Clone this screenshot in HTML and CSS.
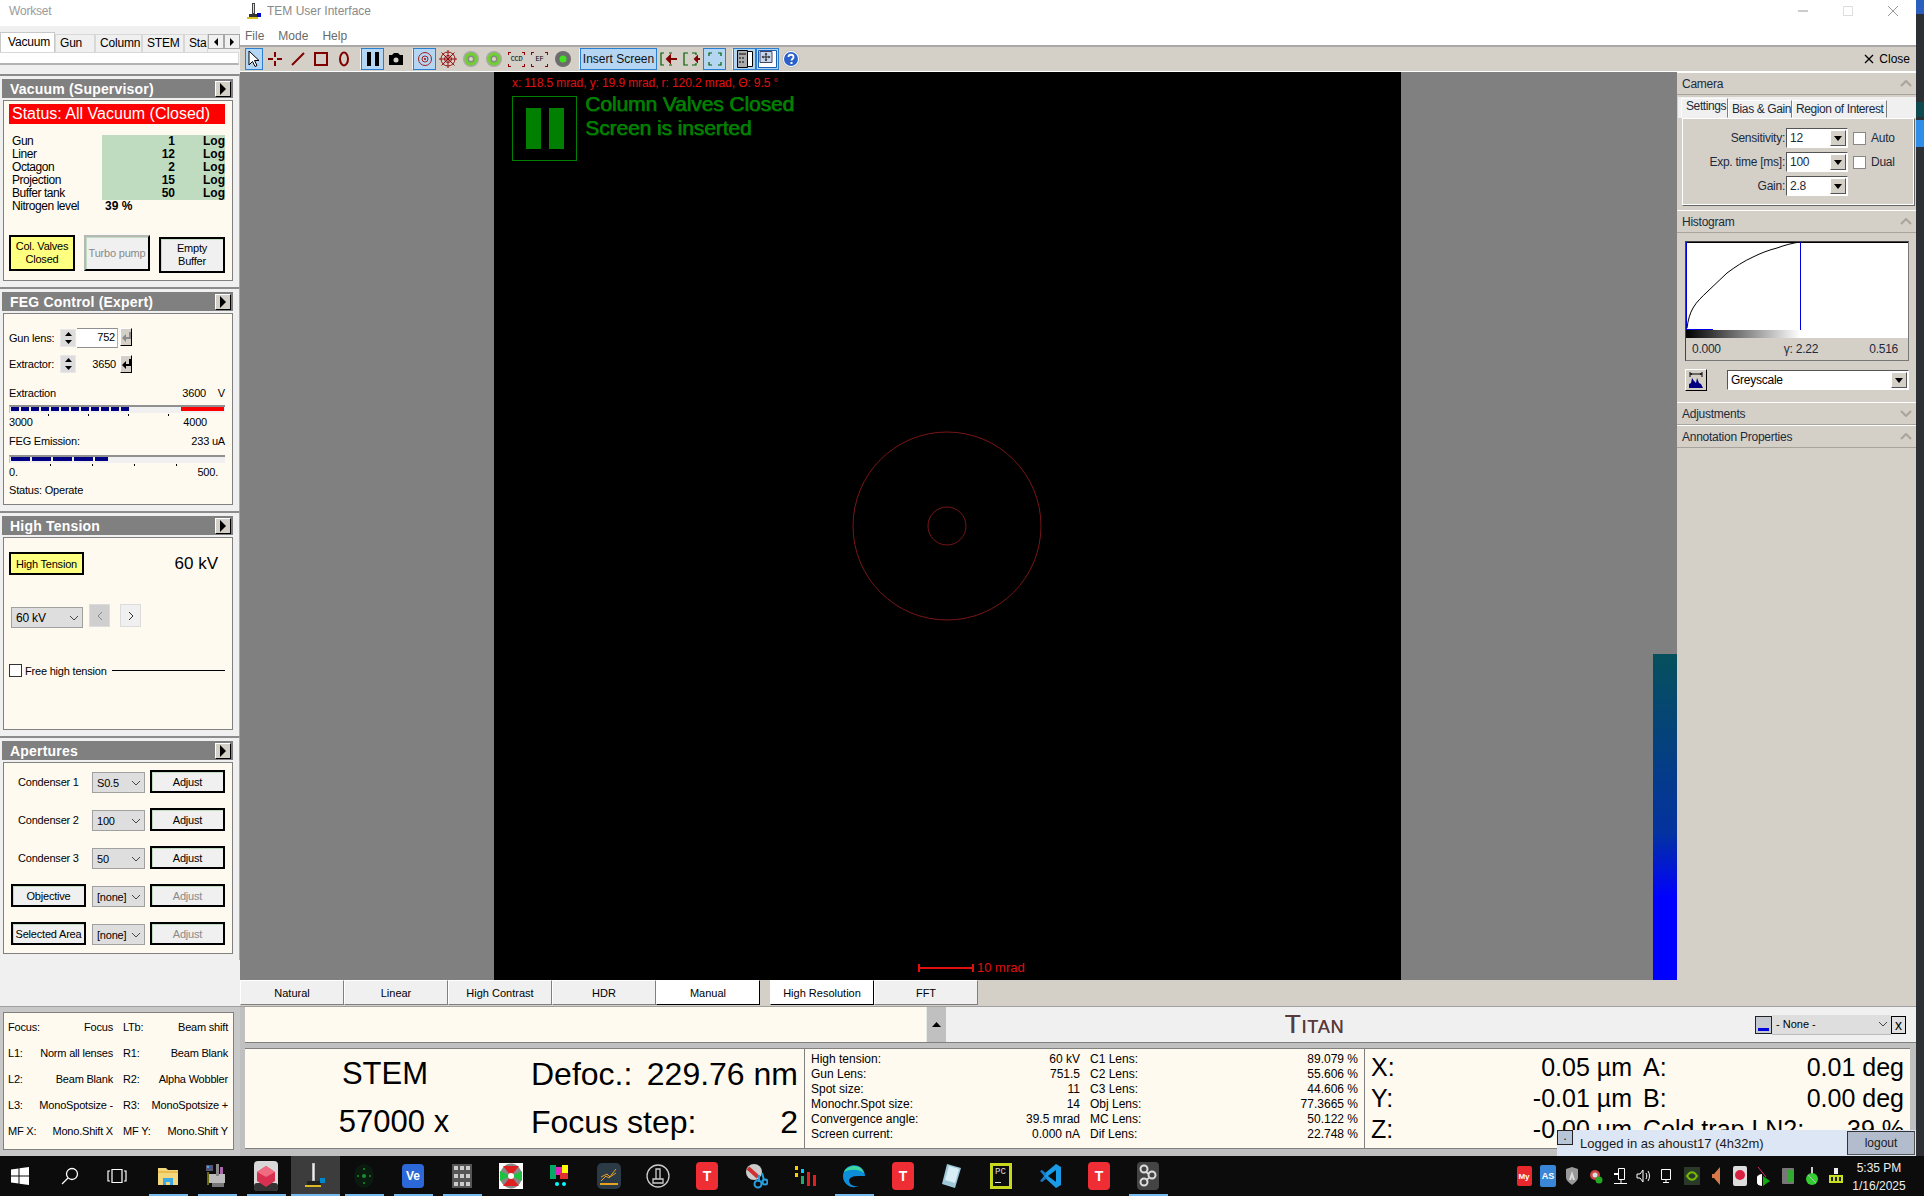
FILE: index.html
```html
<!DOCTYPE html>
<html lang="en">
<head>
<meta charset="utf-8">
<title>TEM User Interface</title>
<link rel="stylesheet" href="styles.css">
</head>
<body>
<div class="app">
  <div class="desk">
    <aside class="side">
      <div class="ws-title">Workset</div>
      <div class="ws-tabs">
        <span class="ws-tab on t54">Vacuum</span><span class="ws-tab t40">Gun</span><span class="ws-tab t47">Column</span><span class="ws-tab t42">STEM</span><span class="ws-tab t24">Sta</span>
        <span class="ws-arrows"><i class="ws-arrow"><svg width="6" height="8" viewBox="0 0 6 8"><path d="M5 0v8L1 4z"/></svg></i><i class="ws-arrow"><svg width="6" height="8" viewBox="0 0 6 8"><path d="M1 0v8l4-4z"/></svg></i></span>
      </div>
      <div class="ws-page"></div>

      <section class="panel first">
        <header class="p-head"><span>Vacuum (Supervisor)</span><i class="p-btn"><svg width="8" height="12" viewBox="0 0 8 12"><path d="M1 0v12l6-6z"/></svg></i></header>
        <div class="p-body vac">
          <div class="vac-status">Status: All Vacuum (Closed)</div>
          <div class="vac-grid">
            <div class="vac-l">Gun</div><div class="vac-g"><b class="vn">1</b><b>Log</b></div>
            <div class="vac-l">Liner</div><div class="vac-g"><b class="vn">12</b><b>Log</b></div>
            <div class="vac-l">Octagon</div><div class="vac-g"><b class="vn">2</b><b>Log</b></div>
            <div class="vac-l">Projection</div><div class="vac-g"><b class="vn">15</b><b>Log</b></div>
            <div class="vac-l">Buffer tank</div><div class="vac-g"><b class="vn">50</b><b>Log</b></div>
            <div class="vac-l">Nitrogen level</div><div class="vac-n"><b>39 %</b></div>
          </div>
          <div class="vac-btns">
            <div class="btn yellow vb">Col. Valves<br>Closed</div>
            <div class="btn dis vb">Turbo pump</div>
            <div class="btn vb low">Empty<br>Buffer</div>
          </div>
        </div>
      </section>

      <section class="panel">
        <header class="p-head"><span>FEG Control (Expert)</span><i class="p-btn"><svg width="8" height="12" viewBox="0 0 8 12"><path d="M1 0v12l6-6z"/></svg></i></header>
        <div class="p-body feg">
          <div class="feg-row r1">
            <span class="feg-lab">Gun lens:</span>
            <span class="spin"><svg width="9" height="5" viewBox="0 0 9 5"><path d="M4.5 0L9 5H0z"/></svg><svg width="9" height="5" viewBox="0 0 9 5"><path d="M4.5 5L9 0H0z"/></svg></span>
            <span class="feg-in">752</span>
            <span class="ret off"><svg width="9" height="11" viewBox="0 0 9 11"><path d="M7 0h2v7H4v3L0 6l4-4v3h3z"/></svg></span>
          </div>
          <div class="feg-row r2">
            <span class="feg-lab">Extractor:</span>
            <span class="spin"><svg width="9" height="5" viewBox="0 0 9 5"><path d="M4.5 0L9 5H0z"/></svg><svg width="9" height="5" viewBox="0 0 9 5"><path d="M4.5 5L9 0H0z"/></svg></span>
            <span class="feg-val">3650</span>
            <span class="ret"><svg width="9" height="11" viewBox="0 0 9 11"><path d="M7 0h2v7H4v3L0 6l4-4v3h3z"/></svg></span>
          </div>
          <div class="feg-line m10"><span>Extraction</span><span class="pair"><span>3600</span><span class="unit">V</span></span></div>
          <div class="bar m4"><span class="seg s1"></span><span class="seg-red"></span></div>
          <div class="ticks k1"></div>
          <div class="feg-line lbl"><span>3000</span><span class="endlab">4000</span></div>
          <div class="feg-line m5"><span>FEG Emission:</span><span>233 uA</span></div>
          <div class="bar m6"><span class="seg s2"></span></div>
          <div class="ticks k2"></div>
          <div class="feg-line lbl"><span>0.</span><span class="endlab2">500.</span></div>
          <div class="feg-line m4"><span>Status: Operate</span></div>
        </div>
      </section>

      <section class="panel">
        <header class="p-head"><span>High Tension</span><i class="p-btn"><svg width="8" height="12" viewBox="0 0 8 12"><path d="M1 0v12l6-6z"/></svg></i></header>
        <div class="p-body ht">
          <div class="ht-top"><div class="btn yellow ht-btn">High Tension</div><span class="ht-kv">60 kV</span></div>
          <div class="ht-mid">
            <div class="combo ht-combo"><span>60 kV</span><svg width="10" height="6" viewBox="0 0 10 6"><path d="M1 1l4 4 4-4" fill="none" stroke="#444"/></svg></div>
            <span class="nav dis-nav"><svg width="6" height="10" viewBox="0 0 6 10"><path d="M5 1L1 5l4 4" fill="none" stroke="#888"/></svg></span>
            <span class="nav"><svg width="6" height="10" viewBox="0 0 6 10"><path d="M1 1l4 4-4 4" fill="none" stroke="#333"/></svg></span>
          </div>
          <div class="ht-free"><i class="chk"></i><span>Free high tension</span><i class="ht-rule"></i></div>
        </div>
      </section>

      <section class="panel">
        <header class="p-head"><span>Apertures</span><i class="p-btn"><svg width="8" height="12" viewBox="0 0 8 12"><path d="M1 0v12l6-6z"/></svg></i></header>
        <div class="p-body ap">
          <span class="ap-lab">Condenser 1</span><div class="combo"><span>S0.5</span><svg width="10" height="6" viewBox="0 0 10 6"><path d="M1 1l4 4 4-4" fill="none" stroke="#444"/></svg></div><div class="btn">Adjust</div>
          <span class="ap-lab">Condenser 2</span><div class="combo"><span>100</span><svg width="10" height="6" viewBox="0 0 10 6"><path d="M1 1l4 4 4-4" fill="none" stroke="#444"/></svg></div><div class="btn">Adjust</div>
          <span class="ap-lab">Condenser 3</span><div class="combo"><span>50</span><svg width="10" height="6" viewBox="0 0 10 6"><path d="M1 1l4 4 4-4" fill="none" stroke="#444"/></svg></div><div class="btn">Adjust</div>
          <div class="btn">Objective</div><div class="combo"><span>[none]</span><svg width="10" height="6" viewBox="0 0 10 6"><path d="M1 1l4 4 4-4" fill="none" stroke="#444"/></svg></div><div class="btn grey">Adjust</div>
          <div class="btn">Selected Area</div><div class="combo"><span>[none]</span><svg width="10" height="6" viewBox="0 0 10 6"><path d="M1 1l4 4 4-4" fill="none" stroke="#444"/></svg></div><div class="btn grey">Adjust</div>
        </div>
      </section>

      <div class="side-fill"></div>

      <section class="keys">
        <div class="keys-body">
          <div class="kc"><span>Focus:</span><span>Focus</span></div><div class="kc"><span>LTb:</span><span>Beam shift</span></div>
          <div class="kc"><span>L1:</span><span>Norm all lenses</span></div><div class="kc"><span>R1:</span><span>Beam Blank</span></div>
          <div class="kc"><span>L2:</span><span>Beam Blank</span></div><div class="kc"><span>R2:</span><span>Alpha Wobbler</span></div>
          <div class="kc"><span>L3:</span><span>MonoSpotsize -</span></div><div class="kc"><span>R3:</span><span>MonoSpotsize +</span></div>
          <div class="kc"><span>MF X:</span><span>Mono.Shift X</span></div><div class="kc"><span>MF Y:</span><span>Mono.Shift Y</span></div>
        </div>
      </section>
    </aside>

    <main class="main">
      <div class="titlebar">
        <svg class="app-ic" width="16" height="18" viewBox="0 0 16 18"><path d="M6 1h3v11H6z" fill="#444"/><path d="M7 2h1v9H7z" fill="#ddd"/><path d="M3 12h9v3H3z" fill="#333"/><path d="M1 15h11v2H1z" fill="#d8c020"/><path d="M11 11h4v4h-4z" fill="#00c"/></svg>
        <span class="app-name">TEM User Interface</span>
        <span class="winctl">
          <svg width="12" height="12" viewBox="0 0 12 12"><path d="M1 6h10" stroke="#999"/></svg>
          <svg width="12" height="12" viewBox="0 0 12 12"><path d="M1.500 1.500h9v9h-9z" fill="none" stroke="#ddd"/></svg>
          <svg width="12" height="12" viewBox="0 0 12 12"><path d="M1 1l10 10M11 1L1 11" stroke="#999"/></svg>
        </span>
      </div>
      <nav class="menu"><span>File</span><span>Mode</span><span>Help</span></nav>
      <div class="toolbar">
        <span class="t on narrow"><svg width="14" height="18" viewBox="0 0 14 18"><path d="M2 1v14l3.500-3.500 2.500 5 2-1-2.500-5H12z" fill="#fff" stroke="#000"/></svg></span>
        <span class="t"><svg width="16" height="16" viewBox="0 0 16 16"><path d="M8 1v5M8 10v5M1 8h5M10 8h5" stroke="#800000" stroke-width="2"/></svg></span>
        <span class="t"><svg width="16" height="16" viewBox="0 0 16 16"><path d="M2 14L14 2" stroke="#800000" stroke-width="2"/></svg></span>
        <span class="t"><svg width="16" height="16" viewBox="0 0 16 16"><path d="M2 2h12v12H2z" fill="none" stroke="#800000" stroke-width="2"/></svg></span>
        <span class="t"><svg width="12" height="16" viewBox="0 0 12 16"><ellipse cx="6" cy="8" rx="4" ry="6.500" fill="none" stroke="#800000" stroke-width="2"/></svg></span>
        <span class="t-sep short"></span>
        <span class="t on"><svg width="14" height="14" viewBox="0 0 14 14"><path d="M1 0h4v14H1zM9 0h4v14H9z" fill="#000"/></svg></span>
        <span class="t"><svg width="16" height="14" viewBox="0 0 16 14"><path d="M1 3h3l2-2h4l2 2h3v10H1z" fill="#000"/><circle cx="8" cy="8" r="2.500" fill="#d4d0c8"/></svg></span>
        <span class="t-sep short"></span>
        <span class="t on"><svg width="16" height="16" viewBox="0 0 16 16" fill="none" stroke="#a02020"><circle cx="8" cy="8" r="6.500"/><circle cx="8" cy="8" r="3"/><circle cx="8" cy="8" r=".7" fill="#a02020"/></svg></span>
        <span class="t"><svg width="18" height="18" viewBox="0 0 18 18" fill="none" stroke="#900000" stroke-width=".9"><circle cx="9" cy="9" r="7"/><circle cx="9" cy="9" r="3.500"/><path d="M9 0v18M0 9h18M2.500 2.500l13 13M15.500 2.500l-13 13"/></svg></span>
        <span class="t"><svg width="16" height="16" viewBox="0 0 16 16"><circle cx="8" cy="8" r="8" fill="#a8a8a0"/><circle cx="8" cy="8" r="6.500" fill="#70d030"/><circle cx="8" cy="8" r="3.500" fill="#888"/><circle cx="8" cy="8" r="2" fill="#d8d8c0"/></svg></span>
        <span class="t"><svg width="16" height="16" viewBox="0 0 16 16"><circle cx="8" cy="8" r="8" fill="#a8a8a0"/><circle cx="8" cy="8" r="6.500" fill="#70d030"/><circle cx="8" cy="8" r="3.500" fill="#888"/><circle cx="8" cy="8" r="2" fill="#d8d8c0"/></svg></span>
        <span class="t"><span class="crop">CCD</span></span>
        <span class="t"><span class="crop">EF</span></span>
        <span class="t"><svg width="16" height="16" viewBox="0 0 16 16"><circle cx="8" cy="8" r="8" fill="#6c6c6c"/><circle cx="8" cy="8" r="3.500" fill="#40e020"/></svg></span>
        <span class="t-sep short"></span>
        <span class="t on wide">Insert Screen</span>
        <span class="t"><svg width="18" height="14" viewBox="0 0 18 14" fill="none" stroke="#006000" stroke-width="1.200"><path d="M4 1H1v12h3M9 1h3M12 13H9"/><path d="M17 7H10M10 4L7 7l3 3z" stroke="#800000" stroke-width="2" fill="#800000"/></svg></span>
        <span class="t"><svg width="18" height="14" viewBox="0 0 18 14" fill="none" stroke="#006000" stroke-width="1.200"><path d="M5 1H1v12h4M9 1h4v2M9 13h4v-2"/><path d="M17 7h-3M14 5l-2 2 2 2z" stroke="#800000" stroke-width="2" fill="#800000"/></svg></span>
        <span class="t on"><svg width="14" height="14" viewBox="0 0 14 14" fill="none" stroke="#006000" stroke-width="1.200"><path d="M4 1H1v3M10 1h3v3M1 10v3h3M13 10v3h-3"/></svg></span>
        <span class="t-sep"></span>
        <span class="t on"><svg width="16" height="18" viewBox="0 0 16 18"><path d="M5.500 1.500h10v15h-10z" fill="#fff" stroke="#000"/><path d="M.5 .5h10v17H.5z" fill="#aaa" stroke="#000"/><path d="M2 3h7v2H2zM2 7h2v2H2zM5 7h2v2H5zM2 11h2v2H2zM5 11h2v2H5z" fill="#555"/></svg></span>
        <span class="t on"><svg width="19" height="18" viewBox="0 0 19 18"><path d="M.5.500h18v17H.5z" fill="#fff" stroke="#1a5fb0"/><path d="M2 1.500h12v11H2z" fill="#c8d8ec" stroke="#446"/><path d="M8 4v6M5 7h6" stroke="#222"/><path d="M8 2.500l-1.500 2h3zM8 11.500l-1.500-2h3zM3.500 7l2-1.500v3zM12.500 7l-2-1.500v3z" fill="#222"/></svg></span>
        <span class="t"><svg width="18" height="18" viewBox="0 0 18 18"><circle cx="9" cy="9" r="8.500" fill="#fff" stroke="#bbb"/><circle cx="9" cy="9" r="7" fill="#2a60c8"/><path d="M6.500 7c0-3 5-3 5 0 0 2-2 2-2 3.500" fill="none" stroke="#fff" stroke-width="1.800"/><path d="M8.500 12h2v2h-2z" fill="#fff"/></svg></span>
        <span class="close"><svg width="10" height="10" viewBox="0 0 10 10"><path d="M1 1l8 8M9 1L1 9" stroke="#000" stroke-width="1.300"/></svg>Close</span>
      </div>

      <div class="work">
        <div class="gutter"></div>
        <div class="canvas">
          <div class="coord">x: 118.5 mrad, y: 19.9 mrad, r: 120.2 mrad, &Theta;: 9.5 &deg;</div>
          <div class="notice">
            <div class="pausebox"><i></i><i></i></div>
            <div class="notice-t"><div>Column Valves Closed</div><div>Screen is inserted</div></div>
          </div>
          <svg class="rings" width="194" height="194" viewBox="0 0 194 194" fill="none" stroke="#7a1616" stroke-width="1"><circle cx="97" cy="97" r="94"/><circle cx="97" cy="97" r="19"/></svg>
          <div class="scale"><svg width="56" height="8" viewBox="0 0 56 8"><path d="M1 0v8M55 0v8M1 4h54" stroke="#e01010" stroke-width="2"/></svg><span>10 mrad</span></div>
        </div>
        <div class="gutter2"></div>
        <div class="lut"><div class="lut-fill"></div></div>
        <div class="right">
          <div class="sec-h"><span>Camera</span><svg width="12" height="7" viewBox="0 0 12 7"><path d="M1 6l5-5 5 5" fill="none" stroke="#a8a49c" stroke-width="2"/></svg></div>
          <div class="cam">
            <div class="cam-tabs"><span class="cam-tab on">Settings</span><span class="cam-tab w63">Bias &amp; Gain</span><span class="cam-tab w94">Region of Interest</span></div>
            <div class="cam-page">
              <div class="cam-row"><span class="cam-l">Sensitivity:</span><div class="cb"><span>12</span><i class="cb-a"><svg width="8" height="5" viewBox="0 0 8 5"><path d="M0 0h8L4 5z"/></svg></i></div><i class="cam-chk"></i><span>Auto</span></div>
              <div class="cam-row"><span class="cam-l">Exp. time [ms]:</span><div class="cb"><span>100</span><i class="cb-a"><svg width="8" height="5" viewBox="0 0 8 5"><path d="M0 0h8L4 5z"/></svg></i></div><i class="cam-chk"></i><span>Dual</span></div>
              <div class="cam-row"><span class="cam-l">Gain:</span><div class="cb"><span>2.8</span><i class="cb-a"><svg width="8" height="5" viewBox="0 0 8 5"><path d="M0 0h8L4 5z"/></svg></i></div></div>
            </div>
          </div>
          <div class="sec-h"><span>Histogram</span><svg width="12" height="7" viewBox="0 0 12 7"><path d="M1 6l5-5 5 5" fill="none" stroke="#a8a49c" stroke-width="2"/></svg></div>
          <div class="hist">
            <div class="hist-box">
              <svg class="hist-plot" width="222" height="96" viewBox="0 0 222 96">
                <defs><linearGradient id="g"><stop offset="0" stop-color="#000"/><stop offset="1" stop-color="#fff"/></linearGradient></defs>
                <rect width="222" height="96" fill="#fff"/>
                <rect x="0" y="88" width="114" height="8" fill="url(#g)"/>
                <path d="M0 .5h222" stroke="#000"/>
                <path d="M.5 0v88M114.500 0v88" stroke="#0000e0"/>
                <path d="M0 87.500h27" stroke="#0000e0"/>
                <path d="M1 86C2 78 4 71 7 66C11 59 16 55 21 50L41 31C49 25 58 19 67 15C75 11 83 8 91 6C99 3 107 1 114 0" fill="none" stroke="#000"/>
              </svg>
              <div class="hist-vals"><span>0.000</span><span class="gam">&gamma;: 2.22</span><span>0.516</span></div>
            </div>
            <div class="hist-ctl">
              <span class="hist-btn"><svg width="18" height="18" viewBox="0 0 18 18"><path d="M3 1v5M15 1v5M3 3h12" stroke="#000"/><path d="M3 3l2-1v2zM15 3l-2-1v2z"/><path d="M2 17v-4l2-1 1-5 2 3 2 2 1-5 2 5 2 1 2 4z" fill="#000080"/></svg></span>
              <div class="cb grow"><span>Greyscale</span><i class="cb-a"><svg width="8" height="5" viewBox="0 0 8 5"><path d="M0 0h8L4 5z"/></svg></i></div>
            </div>
          </div>
          <div class="sec-h"><span>Adjustments</span><svg width="12" height="7" viewBox="0 0 12 7"><path d="M1 1l5 5 5-5" fill="none" stroke="#a8a49c" stroke-width="2"/></svg></div>
          <div class="sec-h"><span>Annotation Properties</span><svg width="12" height="7" viewBox="0 0 12 7"><path d="M1 6l5-5 5 5" fill="none" stroke="#a8a49c" stroke-width="2"/></svg></div>
        </div>
      </div>

      <div class="modes">
        <span class="mode">Natural</span><span class="mode">Linear</span><span class="mode">High Contrast</span><span class="mode">HDR</span><span class="mode act">Manual</span><span class="mode act gapl">High Resolution</span><span class="mode">FFT</span>
      </div>

      <div class="bottom">
        <div class="msg">
          <div class="msg-text"></div>
          <span class="msg-up"><svg width="9" height="5" viewBox="0 0 9 5"><path d="M4.500 0L9 5H0z"/></svg></span>
          <div class="msg-brand"><span class="titan">Titan</span></div>
          <div class="msg-sel">
            <span class="sel-ic"><i></i></span>
            <div class="combo sel-c"><span>- None -</span><svg width="10" height="6" viewBox="0 0 10 6"><path d="M1 1l4 4 4-4" fill="none" stroke="#444"/></svg></div>
            <span class="sel-x">x</span>
          </div>
        </div>
        <div class="stat">
          <div class="st-a">
            <div class="st-mode">STEM</div><div class="st-def"><span>Defoc.:</span><span>229.76 nm</span></div>
            <div class="st-mode mag">57000 x</div><div class="st-foc"><span>Focus step:</span><span>2</span></div>
          </div>
          <div class="st-b">
            <span>High tension:</span><span class="r">60 kV</span><span>C1 Lens:</span><span class="r">89.079 %</span>
            <span>Gun Lens:</span><span class="r">751.5</span><span>C2 Lens:</span><span class="r">55.606 %</span>
            <span>Spot size:</span><span class="r">11</span><span>C3 Lens:</span><span class="r">44.606 %</span>
            <span>Monochr.Spot size:</span><span class="r">14</span><span>Obj Lens:</span><span class="r">77.3665 %</span>
            <span>Convergence angle:</span><span class="r">39.5 mrad</span><span>MC Lens:</span><span class="r">50.122 %</span>
            <span>Screen current:</span><span class="r">0.000 nA</span><span>Dif Lens:</span><span class="r">22.748 %</span>
          </div>
          <div class="st-c">
            <div class="xy"><span>X:</span><span>0.05 &micro;m</span></div><div class="xy"><span>A:</span><span>0.01 deg</span></div>
            <div class="xy"><span>Y:</span><span>-0.01 &micro;m</span></div><div class="xy"><span>B:</span><span>0.00 deg</span></div>
            <div class="xy"><span>Z:</span><span>-0.00 &micro;m</span></div><div class="xy"><span>Cold trap LN2:</span><span>39 %</span></div>
          </div>
        </div>
      </div>
    </main>

    <div class="strip"><i class="sp1"></i><i class="sp2"></i><i class="sp3"></i></div>
  </div>

  <div class="login">
    <span class="login-dot">.</span>
    <span class="login-t">Logged in as ahoust17 (4h32m)</span>
    <span class="logout">logout</span>
  </div>

  <footer class="taskbar">
    <span class="tb-i w40"><svg width="18" height="18" viewBox="0 0 18 18" fill="#fff"><path d="M0 2.500l7.500-1v7H0zM8.500 1.300L18 0v8.500H8.500zM0 9.500h7.500v7l-7.500-1zM8.500 9.500H18V18l-9.500-1.300z"/></svg></span>
    <span class="tb-i w60"><svg width="18" height="18" viewBox="0 0 18 18" fill="none" stroke="#fff" stroke-width="1.300"><circle cx="11" cy="7" r="5.500"/><path d="M7 11l-6 6"/></svg></span>
    <span class="tb-i w34"><svg width="20" height="16" viewBox="0 0 20 16" fill="none" stroke="#fff" stroke-width="1.200"><path d="M5 1.500h10v13H5zM3 3H1v10h2M17 3h2v10h-2"/></svg></span>
    <span class="tb-i run lead"><svg width="22" height="20" viewBox="0 0 22 20"><path d="M1 2h8l2 2h10v15H1z" fill="#f4d77a"/><path d="M1 5h20v2H1z" fill="#e8bd4e"/><path d="M6 19v-7h10v7h-3v-3H9v3z" fill="#3aa9e8"/></svg></span>
    <span class="tb-i run"><svg width="24" height="26" viewBox="0 0 24 26"><path d="M4 11h16v9H4z" fill="#bbb"/><path d="M7 20h12v4H7z" fill="#777"/><path d="M11 1h3v12h-3z" fill="#888"/><path d="M1 2h7v6H1z" fill="#557"/><path d="M2 3h2v2H2z" fill="#4af"/><path d="M15 4h3v7h-3z" fill="#a6a"/><path d="M3 9v13" stroke="#cc0"/></svg></span>
    <span class="tb-i run"><svg width="24" height="30" viewBox="0 0 24 30"><rect width="24" height="30" rx="4" fill="#d8d8d8"/><rect y="22" width="24" height="8" rx="3" fill="#333"/><path d="M12 5l9 6v9l-9 6-9-6v-9z" fill="#d83050"/><path d="M12 5l9 6-9 5-9-5z" fill="#f06a80"/></svg></span>
    <span class="tb-i run act"><svg width="24" height="30" viewBox="0 0 24 30"><path d="M9 2h3v18H9z" fill="#bbb"/><path d="M10 3h1v16h-1z" fill="#eee"/><path d="M4 20h14v4H4z" fill="#222"/><path d="M2 24h16v2H2z" fill="#ddb820"/><path d="M17 17h5v5h-5z" fill="#08c"/></svg></span>
    <span class="tb-i run"><svg width="22" height="26" viewBox="0 0 22 26"><ellipse cx="11" cy="13" rx="10" ry="12" fill="#0a1a0e"/><g fill="#1b8f30"><circle cx="11" cy="13" r="2"/><circle cx="11" cy="6" r="1"/><circle cx="11" cy="20" r="1"/><circle cx="5" cy="13" r="1"/><circle cx="17" cy="13" r="1"/></g></svg></span>
    <span class="tb-i run"><span class="ve">Ve</span></span>
    <span class="tb-i run"><svg width="22" height="26" viewBox="0 0 22 26"><rect x="1" y="1" width="20" height="24" fill="#555"/><g fill="#ccc"><rect x="3" y="3" width="4" height="4"/><rect x="9" y="3" width="4" height="4"/><rect x="15" y="3" width="4" height="4"/><rect x="3" y="11" width="4" height="4"/><rect x="9" y="11" width="4" height="4"/><rect x="15" y="11" width="4" height="4"/><rect x="3" y="19" width="4" height="4"/><rect x="9" y="19" width="4" height="4"/><rect x="15" y="19" width="4" height="4"/></g></svg></span>
    <span class="tb-i"><svg width="24" height="26" viewBox="0 0 24 26"><rect width="24" height="26" fill="#fff"/><ellipse cx="12" cy="13" rx="11" ry="12.500" fill="#888"/><path d="M12 13L4 3h16zM12 13L4 23h16z" fill="#e02020"/><path d="M12 13L1 8v10zM12 13l11-5v10z" fill="#20c040"/><circle cx="12" cy="13" r="3" fill="#fff"/></svg></span>
    <span class="tb-i"><svg width="24" height="26" viewBox="0 0 24 26"><path d="M2 2h6v14H2z" fill="#0a6"/><path d="M8 4h8v8H8z" fill="#e020c0"/><path d="M14 2h6v8h-6z" fill="#ff0"/><path d="M12 10h8v6h-8z" fill="#e03030"/><g fill="#0ff"><circle cx="9" cy="21" r="2"/><circle cx="16" cy="21" r="2"/></g></svg></span>
    <span class="tb-i"><svg width="24" height="26" viewBox="0 0 24 26"><rect width="24" height="26" rx="5" fill="#2b3a45"/><path d="M3 21h18" stroke="#e8a020" stroke-width="2"/><path d="M4 18l5-5 3 2 7-9M4 14l6-3 3 3 6-4" fill="none" stroke="#e8a020"/></svg></span>
    <span class="tb-i"><svg width="24" height="26" viewBox="0 0 24 26" fill="none" stroke="#ccc" stroke-width="1.300"><circle cx="12" cy="13" r="11"/><path d="M10 6h4v10h-4zM7 16h10v4H7z"/></svg></span>
    <span class="tb-i"><span class="tapp">T</span></span>
    <span class="tb-i"><svg width="24" height="26" viewBox="0 0 24 26"><circle cx="10" cy="9" r="8" fill="#ccc"/><path d="M4 5l10 9" stroke="#d03030" stroke-width="4"/><circle cx="14" cy="21" r="3.500" fill="none" stroke="#28a0e0" stroke-width="2"/><circle cx="21" cy="19" r="2.500" fill="none" stroke="#28a0e0" stroke-width="2"/><path d="M15 12l0 7M18 10l2 7" stroke="#28a0e0" stroke-width="2"/></svg></span>
    <span class="tb-i"><svg width="22" height="24" viewBox="0 0 22 24"><g fill="#fc0"><path d="M1 2h3v4H1zM1 9h3v4H1z"/></g><g fill="#0cf"><path d="M7 5h3v4H7z"/></g><g fill="#e02020"><path d="M13 8h3v14h-3zM19 11h3v11h-3z"/></g><path d="M7 12h3v8H7z" fill="#2a6"/></svg></span>
    <span class="tb-i run"><svg width="26" height="26" viewBox="0 0 26 26"><path d="M24 13a11 11 0 10-6 10c-5 1-10-1-10-6 2-5 9-4 16-4z" fill="#0c8ed8"/><path d="M3 9c3-7 17-9 20 1-5-4-14-4-20-1z" fill="#3fd6a0"/></svg></span>
    <span class="tb-i"><span class="tapp">T</span></span>
    <span class="tb-i"><svg width="24" height="26" viewBox="0 0 24 26"><path d="M7 1l14 4-6 20-13-4z" fill="#9fc8d8"/><path d="M9 3l10 3-4 14-10-3z" fill="#d8eef4"/></svg></span>
    <span class="tb-i"><span class="pc">PC<i></i></span></span>
    <span class="tb-i"><svg width="24" height="26" viewBox="0 0 24 26"><path d="M18 1l5 3v18l-5 3-12-11 0-3z" fill="#1a9be8"/><path d="M18 7v12l-8-6z" fill="#0c0c0c"/><path d="M2 8l2-1 5 4-3 2zM2 18l2 1 5-4-3-2z" fill="#1a78c8"/></svg></span>
    <span class="tb-i"><span class="tapp">T</span></span>
    <span class="tb-i run"><svg width="22" height="28" viewBox="0 0 22 28"><rect width="22" height="28" rx="4" fill="#444"/><g fill="none" stroke="#ddd" stroke-width="2"><circle cx="7" cy="7" r="3.500"/><circle cx="15" cy="13" r="3.500"/><circle cx="7" cy="20" r="3.500"/><path d="M9 10l3 2M12 16l-3 2"/></g></svg></span>

    <span class="tray">
      <span class="ti"><span class="my">My</span></span>
      <span class="ti"><span class="as">AS</span></span>
      <span class="ti"><svg width="14" height="18" viewBox="0 0 14 18"><path d="M1 2l6-2 6 2v8c0 4-4 6-6 8-2-2-6-4-6-8z" fill="#999"/><path d="M7 4l3 9H8l-1-3-1 3H4z" fill="#ddd"/></svg></span>
      <span class="ti"><svg width="14" height="16" viewBox="0 0 14 16"><circle cx="6" cy="7" r="5" fill="#c44"/><circle cx="6" cy="7" r="2.500" fill="#ddd"/><circle cx="10" cy="12" r="3.500" fill="#2a2"/></svg></span>
      <span class="ti"><svg width="16" height="18" viewBox="0 0 16 18" fill="none" stroke="#fff"><path d="M6.500 1.500h6v11h-6zM9 13v3M2 16.500h13"/><path d="M2 7h4" stroke-width="2"/></svg></span>
      <span class="ti"><svg width="16" height="16" viewBox="0 0 16 16" fill="none" stroke="#fff"><path d="M1 6h3l3-4v12l-3-4H1z"/><path d="M10 5c1 2 1 4 0 6M12 3c2 3 2 7 0 10"/></svg></span>
      <span class="ti"><svg width="16" height="16" viewBox="0 0 16 16" fill="none" stroke="#fff"><path d="M1.500 1.500h9v10h-9zM6 11.500v3M3 14.500h6"/></svg></span>
      <span class="ti"><svg width="16" height="18" viewBox="0 0 16 18"><rect width="16" height="18" fill="#2a3a2a"/><path d="M3 9c3-5 7-5 10 0-3 5-7 5-10 0z" fill="none" stroke="#76b900" stroke-width="2"/></svg></span>
      <span class="ti"><svg width="10" height="20" viewBox="0 0 10 20"><path d="M9 1v18L3 12H1V8h2z" fill="#d8794a"/></svg></span>
      <span class="ti"><svg width="14" height="20" viewBox="0 0 14 20"><rect width="14" height="20" rx="2" fill="#ddd"/><circle cx="7" cy="9" r="5" fill="#d82040"/></svg></span>
      <span class="ti"><svg width="14" height="20" viewBox="0 0 14 20"><path d="M1 1l8 10" stroke="#e02080"/><path d="M5 8a6 6 0 100 12" fill="#fff"/><path d="M6 10l7 5-7 5z" fill="#1a1"/></svg></span>
      <span class="ti"><svg width="12" height="16" viewBox="0 0 12 16"><rect width="12" height="16" rx="1" fill="#777"/><rect x="6" y="2" width="5" height="12" fill="#3a3"/></svg></span>
      <span class="ti"><svg width="14" height="20" viewBox="0 0 14 20"><path d="M6 1h2v8H6z" fill="#ccc"/><circle cx="7" cy="13" r="6" fill="#3c3"/><path d="M3 9l8 8" stroke="#bbb"/></svg></span>
      <span class="ti"><svg width="16" height="18" viewBox="0 0 16 18"><path d="M6 1h4v6H6z" fill="#eee"/><path d="M1 8h14v8H1z" fill="#c8e020"/><path d="M3 10h2v4H3zM7 10h2v4H7zM11 10h2v4h-2z" fill="#222"/></svg></span>
      <span class="clock"><span>5:35 PM</span><span>1/16/2025</span></span>
    </span>
  </footer>
</div>
</body>
</html>
```
FILE: styles.css
```css
* { box-sizing: border-box; }
html, body { margin: 0; padding: 0; }
body { width: 1924px; height: 1196px; overflow: hidden; font: 11px "Liberation Sans", Arial, sans-serif; color: #000; background: #0c0c0c; }
i { display: block; font-style: normal; }
svg { display: block; flex: none; }

.app { position: relative; width: 1924px; height: 1196px; display: flex; flex-direction: column; }
.desk { display: flex; height: 1156px; flex: none; }

/* ---- left workset ---- */
.side { width: 240px; flex: none; display: flex; flex-direction: column; background: #f0f0f0; letter-spacing: -.2px; }
.ws-title { height: 26px; background: #fff; color: #9a9a9a; font-size: 12px; line-height: 22px; padding-left: 9px; flex: none; }
.ws-tabs { height: 26px; display: flex; align-items: flex-end; flex: none; }
.ws-tab { height: 18px; background: #f0f0f0; border: 1px solid #d8d8d8; border-bottom: 0; font-size: 12px; line-height: 17px; padding-left: 4px; white-space: nowrap; overflow: hidden; }
.ws-tab.on { background: #fff; height: 20px; border-color: #c8c8c8; padding-left: 7px; line-height: 18px; }
.t54 { width: 55px; } .t40 { width: 40px; } .t47 { width: 47px; } .t42 { width: 42px; } .t24 { width: 24px; }
.ws-arrows { display: flex; align-self: flex-start; margin-top: 8px; }
.ws-arrow { width: 16px; height: 15px; background: #f0f0f0; border: 1px solid #a8a8a8; display: flex; align-items: center; justify-content: center; }
.ws-page { height: 13px; width: 239px; background: #fff; border: 1px solid #d8d8d8; border-bottom: 2px solid #b4b4b4; border-left: 0; flex: none; }

.panel { flex: none; border-top: 2px solid #8c8c8c; padding: 3px 6px 6px 2px; display: flex; flex-direction: column; gap: 2px; border-right: 1px solid #a8a8a8; }
.panel.first { margin-top: 9px; }
.p-head { height: 19px; background: #808080; color: #fff; font: bold 14px "Liberation Sans", Arial, sans-serif; letter-spacing: .2px; display: flex; align-items: center; justify-content: space-between; padding: 0 2px 0 8px; flex: none; }
.p-btn { width: 16px; height: 16px; background: #d4d0c8; border: 1px solid; border-color: #fff #000 #000 #fff; display: flex; align-items: center; justify-content: center; }
.p-body { border: 1px solid #808080; background: #fffaf0; margin-left: 1px; }

.vac { height: 181px; padding: 3px 7px 0 5px; }
.vac-status { height: 20px; background: #f00; color: #fff; font-size: 16px; letter-spacing: 0; line-height: 20px; padding-left: 3px; }
.vac-grid { margin-top: 11px; display: grid; grid-template-columns: 93px 123px; grid-auto-rows: 13px; line-height: 13px; font-size: 12px; letter-spacing: -.45px; }
.vac-l { padding-left: 3px; }
.vac-g { background: #c0dcc0; display: grid; grid-template-columns: 73px 1fr; text-align: right; letter-spacing: 0; }
.vac-n { padding-left: 3px; letter-spacing: 0; }
.vac-btns { display: flex; gap: 9px; margin-top: 22px; align-items: flex-start; }
.vb { width: 66px; height: 36px; text-align: center; line-height: 13px; }
.low { margin-top: 2px; }

.btn { border: 2px solid #000; background: #f0f0f0; box-shadow: inset 1px 1px 0 #c0dcc0; display: flex; align-items: center; justify-content: center; text-align: center; font-size: 11px; white-space: nowrap; }
.btn.yellow { background: #ffff80; box-shadow: none; }
.btn.dis { color: #8a8a8a; border-color: #b8b8b8 #000 #000 #b8b8b8; }
.btn.grey { color: #8a8a8a; }

.feg { height: 192px; padding: 14px 7px 0 5px; }
.feg-row { display: flex; align-items: center; height: 20px; }
.r2 { margin-top: 6px; }
.feg-lab { width: 51px; }
.spin { width: 16px; height: 18px; background: #dcdcdc; border: 1px solid #e8e8e8; display: flex; flex-direction: column; justify-content: space-around; align-items: center; }
.spin svg { width: 7px; height: 4px; }
.feg-in { width: 41px; height: 20px; background: #fff; border: 1px solid #909090; border-left: 0; border-right-color: #b0b0b0; text-align: right; padding-right: 2px; line-height: 16px; margin-left: 1px; }
.feg-val { width: 39px; text-align: right; margin-left: 1px; }
.ret { width: 12px; height: 18px; margin-left: 2px; background: #d4d0c8; border: 1px solid; border-color: #fff #000 #000 #fff; display: flex; align-items: center; justify-content: center; }
.r2 .ret { margin-left: 4px; }
.ret.off svg { fill: #8a8a8a; }
.ret.off { margin-bottom: 2px; }
.feg-line { display: flex; justify-content: space-between; height: 16px; line-height: 16px; }
.m10 { margin-top: 11px; } .m4 { margin-top: 4px; } .m5 { margin-top: 5px; } .m6 { margin-top: 6px; }
.pair { display: flex; gap: 11px; }
.unit { width: 8px; text-align: right; }
.bar { height: 8px; width: 216px; background: #f0f0f0; border-top: 2px solid #909090; border-left: 1px solid #c8c8c8; padding: 0 1px 2px 1px; display: flex; justify-content: space-between; }
.seg { display: block; height: 4px; }
.s1 { width: 118px; background: repeating-linear-gradient(to right, #000080 0 8px, transparent 8px 10px); }
.seg-red { display: block; width: 43px; height: 4px; background: #f00; }
.s2 { width: 97px; background: repeating-linear-gradient(to right, #000080 0 19px, transparent 19px 21px); }
.ticks { height: 2px; margin-top: 1px; background-repeat: repeat-x; }
.k1 { width: 165px; background-image: linear-gradient(to right, transparent 39px, #000 39px 41px, transparent 41px); background-size: 40px 2px; }
.k2 { width: 171px; background-image: linear-gradient(to right, transparent 41px, #000 41px 43px, transparent 43px); background-size: 42px 2px; }
.lbl { height: 12px; line-height: 12px; margin-top: 0; }
.endlab { padding-right: 18px; }
.endlab2 { padding-right: 7px; }

.ht { height: 193px; padding: 14px 7px 0 5px; }
.ht-top { display: flex; align-items: center; height: 23px; justify-content: space-between; padding-right: 7px; }
.ht-btn { width: 75px; height: 23px; }
.ht-kv { font-size: 17px; letter-spacing: 0; }
.ht-mid { display: flex; align-items: flex-start; margin-top: 29px; padding-left: 2px; }
.combo { height: 21px; background: #dedede; border: 1px solid #a0a0a0; display: flex; align-items: center; justify-content: space-between; padding: 0 3px 0 4px; font-size: 11px; }
.ht-combo { width: 72px; margin-top: 3px; margin-right: 6px; font-size: 12px; }
.nav { width: 21px; height: 23px; background: #f0f0f0; border: 1px solid #dcdcdc; display: flex; align-items: center; justify-content: center; margin-right: 10px; }
.dis-nav { background: #cfcfcf; }
.ht-free { display: flex; align-items: center; margin-top: 36px; height: 13px; }
.chk { width: 13px; height: 13px; border: 1px solid #333; background: #fff; margin-right: 3px; }
.ht-rule { flex: 1; height: 1px; background: #000; margin-left: 5px; }

.ap { height: 192px; padding: 7px 7px 0 7px; display: grid; grid-template-columns: 75px 54px 75px; column-gap: 5px; grid-auto-rows: 23px; row-gap: 15px; align-items: center; }
.ap-lab { padding-left: 7px; }
.ap .combo { margin-top: 2px; margin-left: 1px; }
.ap .btn { height: 23px; }

.side-fill { flex: 1; }
.keys { height: 150px; background: #c8c8c8; border-top: 1px solid #a0a0a0; padding: 5px 6px 6px 2px; flex: none; }
.keys-body { height: 138px; margin-left: 1px; border: 1px solid #808080; background: #fffaf0; padding: 1px 4px 0 4px; display: grid; grid-template-columns: 105px 105px; column-gap: 10px; grid-auto-rows: 26px; font-size: 11px; }
.kc { display: flex; justify-content: space-between; align-items: center; }

/* ---- main ---- */
.main { width: 1676px; flex: none; display: flex; flex-direction: column; background: #d4d0c8; }
.titlebar { height: 26px; background: #fff; display: flex; align-items: center; padding: 0 0 4px 6px; flex: none; }
.app-ic { margin-right: 5px; }
.app-name { font-size: 12px; color: #8a8a8a; }
.winctl { margin-left: auto; display: flex; gap: 33px; padding-right: 17px; }
.menu { height: 21px; background: #fff; display: flex; gap: 14px; padding: 3px 0 0 5px; color: #6a6a6a; font-size: 12px; border-bottom: 2px solid #a8a8a8; flex: none; }
.toolbar { height: 25px; display: flex; align-items: center; padding-left: 5px; border-bottom: 1px solid #fff; flex: none; }
.t { width: 23px; height: 22px; display: flex; align-items: center; justify-content: center; border: 1px solid transparent; flex: none; font-size: 12px; }
.t.on { background: #b5d6f2; border-color: #2b7fd0; }
.narrow { width: 18px; }
.wide { width: 77px; color: #111; }
.t-sep { width: 7px; height: 20px; border-right: 1px solid #f4f4f4; flex: none; }
.t-sep.short { width: 6px; }
.crop { width: 17px; height: 15px; display: flex; align-items: center; justify-content: center; font: 7px "Liberation Mono", monospace; letter-spacing: -.3px; color: #000;
  background:
    linear-gradient(#900000,#900000) 0 0/3px 1px no-repeat, linear-gradient(#900000,#900000) 0 0/1px 3px no-repeat,
    linear-gradient(#900000,#900000) 100% 0/3px 1px no-repeat, linear-gradient(#900000,#900000) 100% 0/1px 3px no-repeat,
    linear-gradient(#900000,#900000) 0 100%/3px 1px no-repeat, linear-gradient(#900000,#900000) 0 100%/1px 3px no-repeat,
    linear-gradient(#900000,#900000) 100% 100%/3px 1px no-repeat, linear-gradient(#900000,#900000) 100% 100%/1px 3px no-repeat; }
.close { margin-left: auto; display: flex; align-items: center; gap: 5px; padding-right: 6px; font-size: 12px; }

.work { height: 908px; display: grid; grid-template-columns: 254px 907px 252px 24px 239px; flex: none; }
.gutter, .gutter2 { background: #808080; }
.canvas { position: relative; background: #000; overflow: hidden; }
.coord { position: absolute; left: 18px; top: 4px; color: #e01010; font-size: 12px; letter-spacing: -.1px; white-space: nowrap; }
.notice { position: absolute; left: 18px; top: 24px; display: flex; gap: 8px; }
.pausebox { width: 65px; height: 65px; border: 1px solid #008000; display: flex; gap: 8px; justify-content: center; align-items: center; }
.pausebox i { width: 15px; height: 41px; background: #007f00; }
.notice-t { color: #007f00; font-size: 21px; letter-spacing: -.1px; line-height: 24px; margin-top: -4px; text-shadow: .6px 0 0 #007f00, 1px 1px 0 #003000; }
.rings { position: absolute; left: 356px; top: 357px; }
.scale { position: absolute; left: 424px; top: 888px; display: flex; align-items: center; gap: 3px; color: #e01010; font-size: 13px; }
.lut { background: #808080; display: flex; align-items: flex-end; }
.lut-fill { width: 100%; height: 326px; background: linear-gradient(to bottom, #05505c 0%, #0432a0 55%, #0000ff 75%, #0000ff 100%); }

.right { background: #d4d0c8; display: flex; flex-direction: column; letter-spacing: -.25px; }
.sec-h { height: 23px; flex: none; border-top: 1px solid #fff; border-bottom: 1px solid #a8a49c; display: flex; align-items: center; justify-content: space-between; padding: 0 4px 0 5px; font-size: 12px; color: #1c2a3a; }
.cam { height: 115px; flex: none; padding: 2px 0 4px 5px; }
.cam-tabs { display: flex; height: 21px; background: #f0f0f0; margin-left: -4px; padding-left: 3px; align-items: flex-end; }
.cam-tab { height: 18px; padding: 0 0 0 3px; background: #f0f0f0; border: 1px solid; border-color: #fff #808080 transparent #fff; font-size: 12px; letter-spacing: -.4px; white-space: nowrap; line-height: 17px; width: 47px; color: #1c2a3a; }
.cam-tab.on { height: 20px; padding: 0 0 0 4px; line-height: 15px; }
.w63 { width: 64px; } .w94 { width: 95px; }
.cam-page { height: 88px; border: 1px solid; border-color: #fff #666 #666 #fff; background: #d4d0c8; padding-top: 9px; margin-right: 1px; box-shadow: inset -1px -1px 0 #fff; }
.cam-row { display: flex; align-items: center; height: 20px; margin-bottom: 4px; font-size: 12px; color: #1c2a3a; }
.cam-l { width: 103px; text-align: right; padding-right: 1px; }
.cb { width: 62px; height: 20px; background: #fff; border: 1px solid; border-color: #555 #fff #fff #555; display: flex; align-items: center; justify-content: space-between; padding-left: 3px; font-size: 12px; }
.cb-a { width: 16px; height: 16px; background: #d4d0c8; border: 1px solid; border-color: #fff #555 #555 #fff; display: flex; align-items: center; justify-content: center; margin-right: 1px; }
.cam-chk { width: 13px; height: 13px; background: #fff; border: 1px solid #888; margin: 0 5px; }
.hist { height: 169px; flex: none; padding: 8px 7px 0 8px; }
.hist-box { height: 120px; border: 1px solid; border-color: #444 #777 #777 #444; }
.hist-plot { width: 222px; }
.hist-vals { display: flex; justify-content: space-between; padding: 4px 10px 0 6px; font-size: 12px; color: #1c2a3a; }
.gam { margin-left: 12px; }
.hist-ctl { display: flex; align-items: center; margin-top: 8px; }
.hist-btn { width: 22px; height: 22px; border: 1px solid; border-color: #fff #000 #000 #fff; display: flex; align-items: center; justify-content: center; margin-right: 20px; }
.grow { flex: 1; }

.modes { height: 26px; display: flex; flex: none; }
.mode { width: 104px; height: 25px; background: #f0f0f0; border: 1px solid; border-color: #fff #808080 #808080 #fff; display: flex; align-items: center; justify-content: center; font-size: 11px; }
.mode.act { background: #fff; border-color: #fff #000 #000 #fff; }
.gapl { margin-left: 10px; }

.bottom { height: 150px; flex: none; background: #c0c0c0; border-top: 1px solid #a0a0a0; padding-left: 5px; width: 1676px; }
.msg { height: 36px; display: flex; border-bottom: 1px solid #808080; }
.msg-text { width: 681px; background: #fffaf0; }
.msg-up { width: 20px; background: #c0c0c0; display: flex; align-items: center; justify-content: center; border-left: 1px solid #e8e8e8; }
.msg-brand { width: 809px; background: #f0f0f0; display: flex; justify-content: center; align-items: center; padding-right: 72px; }
.titan { font: 26px "Liberation Sans", sans-serif; font-variant: small-caps; letter-spacing: .8px; color: #5a3a3a; text-shadow: .4px 0 0 #5a3a3a; }
.msg-sel { flex: 1; background: #f0f0f0; display: flex; align-items: center; padding-right: 10px; }
.sel-ic { width: 17px; height: 18px; background: #c4c8d0; border: 1px solid #222; display: flex; align-items: flex-end; padding: 0 2px 2px; flex: none; }
.sel-ic i { width: 100%; height: 3px; background: #0000e0; }
.sel-c { flex: 1; height: 20px; font-size: 11px; border: 0; border-bottom: 1px solid #bbb; }
.sel-x { width: 15px; height: 18px; border: 1px solid #000; background: #e0e0e0; display: flex; align-items: center; justify-content: center; font-size: 14px; line-height: 14px; }
.stat { margin-top: 5px; height: 101px; display: flex; background: #fffaf0; border: 1px solid #808080; border-width: 1px 0 1px 0; width: 1665px; }
.st-a { width: 560px; border-right: 1px solid #808080; display: grid; grid-template-columns: 280px 274px; grid-auto-rows: 48px; align-items: center; padding-top: 1px; }
.st-mode { text-align: center; font-size: 31px; }
.st-mode.mag { padding-left: 18px; }
.st-def, .st-foc { display: flex; justify-content: space-between; font-size: 32px; padding-left: 6px; padding-right: 1px; white-space: nowrap; }
.st-b { width: 560px; border-right: 1px solid #808080; display: grid; grid-template-columns: 190px 79px 210px 68px; grid-auto-rows: 15px; line-height: 15px; padding: 3px 0 0 6px; font-size: 12px; white-space: nowrap; }
.st-b .r { text-align: right; }
.st-b span:nth-child(4n+3) { padding-left: 10px; }
.st-c { flex: 1; display: grid; grid-template-columns: 261px 261px; column-gap: 11px; grid-auto-rows: 31px; padding: 3px 0 0 6px; font-size: 25px; overflow: hidden; white-space: nowrap; align-items: center; }
.xy { display: flex; justify-content: space-between; }

.strip { flex: 1; background: #2c3034; display: flex; flex-direction: column; }
.sp1 { height: 14px; background: #2a5fc0; }
.sp2 { height: 15px; margin-top: 88px; background: #0d4a50; }
.sp3 { height: 27px; margin-top: 3px; background: #2f8fe8; }

.login { position: absolute; left: 1557px; top: 1130px; width: 359px; height: 26px; background: #dce6f4; display: flex; align-items: center; font-size: 13px; color: #1a1a1a; }
.login-dot { position: absolute; left: 0; top: 0; width: 16px; height: 15px; background: #b8c4d8; border: 1px solid #222; text-align: center; line-height: 9px; }
.login-t { margin-left: 23px; }
.logout { margin-left: auto; margin-right: 1px; width: 68px; height: 24px; background: #b2bccc; border: 1px solid; border-color: #333 #555 #555 #333; display: flex; align-items: center; justify-content: center; font-size: 12px; }

/* ---- taskbar ---- */
.taskbar { height: 40px; background: #0c0c0c; display: flex; align-items: stretch; flex: none; }
.tb-i { width: 49px; display: flex; align-items: center; justify-content: center; position: relative; flex: none; }
.w40 { width: 40px; } .w60 { width: 60px; } .w34 { width: 34px; }
.lead { margin-left: 9.5px; }
.tb-i.act { background: #3c3c3c; }
.tb-i.run::after { content: ""; position: absolute; left: 5px; right: 5px; bottom: 0; height: 2px; background: #76b9ed; }
.tb-i.act::after { left: 0; right: 0; }
.ve { width: 22px; height: 24px; background: #2d68d8; color: #fff; border-radius: 4px; font: bold 12px "Liberation Sans", sans-serif; display: flex; align-items: center; justify-content: center; }
.tapp { width: 22px; height: 28px; background: #ee2e34; border-radius: 4px; color: #fff; font: bold 14px "Liberation Sans", sans-serif; display: flex; align-items: center; justify-content: center; }
.pc { width: 22px; height: 26px; border: 3px solid #c8d820; background: #0c0c0c; color: #ddd; font: 9px "Liberation Mono", monospace; padding: 1px 0 0 2px; display: block; line-height: 10px; }
.pc i { width: 6px; height: 1px; background: #ddd; margin-top: 5px; }
.tray { margin-left: auto; display: flex; align-items: center; padding-right: 14px; }
.ti { width: 24px; display: flex; justify-content: center; }
.my { width: 15px; height: 20px; background: #e8282c; color: #fff; font: bold 8px "Liberation Sans", sans-serif; display: flex; align-items: center; justify-content: center; border-radius: 2px; }
.as { width: 16px; height: 22px; background: #3a86d8; color: #fff; font: bold 9px "Liberation Sans", sans-serif; display: flex; align-items: center; justify-content: center; border-radius: 2px; }
.clock { width: 62px; display: flex; flex-direction: column; align-items: center; gap: 5px; padding-top: 2px; color: #eee; font-size: 12px; line-height: 13px; white-space: nowrap; }
```
